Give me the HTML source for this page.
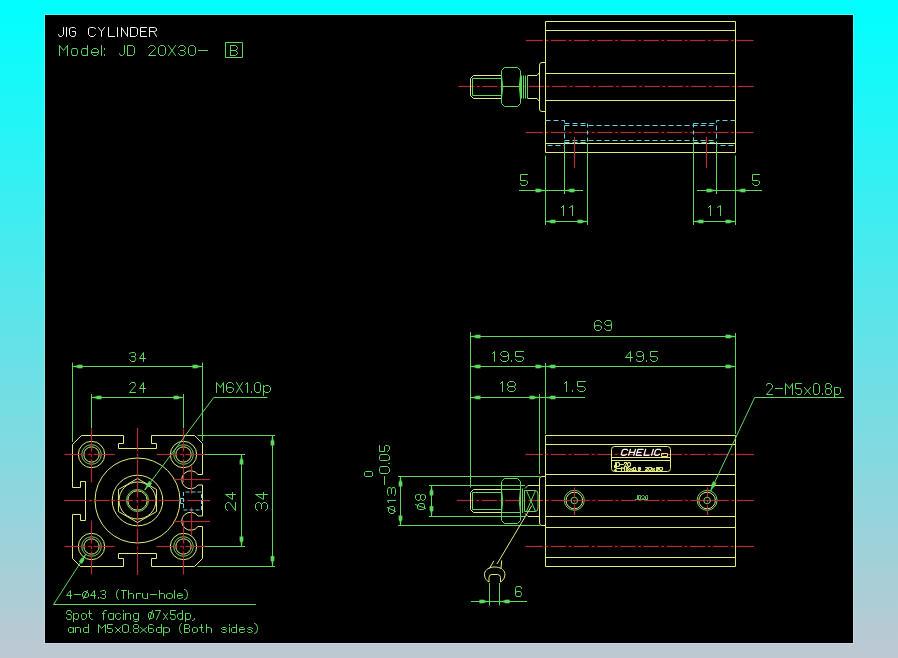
<!DOCTYPE html>
<html><head><meta charset="utf-8"><style>
html,body{margin:0;padding:0;width:898px;height:658px;overflow:hidden}
body{background:linear-gradient(180deg,#00ffff 0%,#bec8d2 100%)}
#cv{position:absolute;left:45px;top:15px;width:808px;height:628px;background:#000;box-shadow:0 0 0 1px rgba(255,255,255,0.22)}
svg{position:absolute;left:0;top:0}
</style></head><body><div id="cv"></div>
<svg width="898" height="658" viewBox="0 0 898 658">
<path d="M707.5 487.5L707.5 515" stroke="#200000" stroke-width="3" fill="none"/>
<path d="M692.1 500.5L722.1 500.5" stroke="#200000" stroke-width="3" fill="none"/>
<path d="M574.5 487.5L574.5 515" stroke="#200000" stroke-width="3" fill="none"/>
<path d="M559.3 500.5L589.3 500.5" stroke="#200000" stroke-width="3" fill="none"/>
<path d="M525.3 546.5L753.8 546.5" stroke="#200000" stroke-width="3" fill="none"/>
<path d="M456.8 500.5L753.8 500.5" stroke="#200000" stroke-width="3" fill="none"/>
<path d="M525.3 454.5L753.8 454.5" stroke="#200000" stroke-width="3" fill="none"/>
<path d="M191.5 507.5L191.5 535.5" stroke="#200000" stroke-width="3" fill="none"/>
<path d="M173 521.5L210 521.5" stroke="#200000" stroke-width="3" fill="none"/>
<path d="M191.5 465.5L191.5 493.5" stroke="#200000" stroke-width="3" fill="none"/>
<path d="M173 479.5L210 479.5" stroke="#200000" stroke-width="3" fill="none"/>
<path d="M137.5 428L137.5 575" stroke="#200000" stroke-width="3" fill="none"/>
<path d="M64 500.5L210 500.5" stroke="#200000" stroke-width="3" fill="none"/>
<path d="M183.5 520.5L183.5 574.5" stroke="#200000" stroke-width="3" fill="none"/>
<path d="M156.5 546.5L206.5 546.5" stroke="#200000" stroke-width="3" fill="none"/>
<path d="M91.5 520.5L91.5 574.5" stroke="#200000" stroke-width="3" fill="none"/>
<path d="M64.5 546.5L114.5 546.5" stroke="#200000" stroke-width="3" fill="none"/>
<path d="M183.5 428.5L183.5 482.5" stroke="#200000" stroke-width="3" fill="none"/>
<path d="M156.5 454.5L206.5 454.5" stroke="#200000" stroke-width="3" fill="none"/>
<path d="M91.5 428.5L91.5 482.5" stroke="#200000" stroke-width="3" fill="none"/>
<path d="M64.5 454.5L114.5 454.5" stroke="#200000" stroke-width="3" fill="none"/>
<path d="M706.5 137L706.5 168" stroke="#200000" stroke-width="3" fill="none"/>
<path d="M574.5 137L574.5 168" stroke="#200000" stroke-width="3" fill="none"/>
<path d="M525.8 132.5L753.5 132.5" stroke="#200000" stroke-width="3" fill="none"/>
<path d="M458.3 86.5L753.5 86.5" stroke="#200000" stroke-width="3" fill="none"/>
<path d="M525.8 40.5L753.5 40.5" stroke="#200000" stroke-width="3" fill="none"/>
<path d="M58.5 34.5L59.5 36.5L61.5 36.5L63.5 34.5L63.5 27.5M66.5 36.5L66.5 27.5M75.5 28.5L74.5 27.5L71.5 27.5L69.5 28.5L69.5 34.5L71.5 36.5L74.5 36.5L75.5 34.5L75.5 31.5L72.5 31.5M95.5 28.5L93.5 27.5L90.5 27.5L88.5 28.5L88.5 34.5L90.5 36.5L93.5 36.5L95.5 34.5M98.5 27.5L101.5 31.5L104.5 27.5M101.5 31.5L101.5 36.5M108.5 27.5L108.5 36.5L114.5 36.5M117.5 36.5L117.5 27.5M121.5 36.5L121.5 27.5L127.5 36.5L127.5 27.5M130.5 36.5L130.5 27.5L135.5 27.5L137.5 28.5L137.5 34.5L135.5 36.5L130.5 36.5M146.5 27.5L140.5 27.5L140.5 36.5L146.5 36.5M140.5 31.5L145.5 31.5M149.5 36.5L149.5 27.5L154.5 27.5L156.5 28.5L156.5 30.5L154.5 31.5L149.5 31.5M153.5 31.5L156.5 36.5" stroke="#f5f5f5" fill="none" stroke-width="1.0" stroke-linecap="round" stroke-linejoin="round"/>
<path d="M59.5 55.5L59.5 45.5L63.5 50.5L67.5 45.5L67.5 55.5M72.5 55.5L76.5 55.5L77.5 53.5L77.5 50.5L76.5 48.5L72.5 48.5L71.5 50.5L71.5 53.5L72.5 55.5M87.5 45.5L87.5 55.5M87.5 50.5L86.5 48.5L82.5 48.5L81.5 50.5L81.5 53.5L82.5 55.5L86.5 55.5L87.5 53.5M91.5 52.5L98.5 52.5L98.5 50.5L96.5 48.5L93.5 48.5L91.5 50.5L91.5 53.5L93.5 55.5L96.5 55.5L98.5 53.5M101.5 55.5L101.5 45.5M104.5 55.5L104.5 54.5M104.5 49.5L104.5 48.5M119.5 53.5L120.5 55.5L122.5 55.5L124.5 53.5L124.5 45.5M127.5 55.5L127.5 45.5L132.5 45.5L134.5 47.5L134.5 53.5L132.5 55.5L127.5 55.5M148.5 47.5L150.5 45.5L153.5 45.5L155.5 47.5L155.5 48.5L148.5 55.5L155.5 55.5M160.5 55.5L163.5 55.5L165.5 53.5L165.5 47.5L163.5 45.5L160.5 45.5L158.5 47.5L158.5 53.5L160.5 55.5M168.5 55.5L175.5 45.5M168.5 45.5L175.5 55.5M178.5 47.5L180.5 45.5L183.5 45.5L185.5 47.5L185.5 48.5L183.5 50.5L185.5 52.5L185.5 53.5L183.5 55.5L180.5 55.5L178.5 53.5M180.5 50.5L183.5 50.5M190.5 55.5L193.5 55.5L195.5 53.5L195.5 47.5L193.5 45.5L190.5 45.5L188.5 47.5L188.5 53.5L190.5 55.5M198.5 50.5L207.5 50.5" stroke="#5fd75f" fill="none" stroke-width="1.0" stroke-linecap="round" stroke-linejoin="round"/>
<path d="M225.5 42.5H242.5V57.5H225.5Z" stroke="#5fd75f" fill="none" stroke-width="1"/>
<path d="M230.5 55.5L230.5 45.5L235.5 45.5L237.5 47.5L237.5 48.5L235.5 50.5L230.5 50.5M235.5 50.5L237.5 52.5L237.5 53.5L235.5 55.5L230.5 55.5" stroke="#5fd75f" fill="none" stroke-width="1.0" stroke-linecap="round" stroke-linejoin="round"/>
<path d="M525.80 40.50L542.75 40.50M545.55 40.50L548.15 40.50M550.95 40.50L565.95 40.50M568.75 40.50L571.35 40.50M574.15 40.50L589.15 40.50M591.95 40.50L594.55 40.50M597.35 40.50L612.35 40.50M615.15 40.50L617.75 40.50M620.55 40.50L635.55 40.50M638.35 40.50L640.95 40.50M643.75 40.50L658.75 40.50M661.55 40.50L664.15 40.50M666.95 40.50L681.95 40.50M684.75 40.50L687.35 40.50M690.15 40.50L705.15 40.50M707.95 40.50L710.55 40.50M713.35 40.50L728.35 40.50M731.15 40.50L733.75 40.50M736.55 40.50L753.50 40.50" stroke="#a0343e" stroke-width="1" fill="none"/>
<path d="M458.30 86.50L474.20 86.50M477.00 86.50L479.60 86.50M482.40 86.50L497.40 86.50M500.20 86.50L502.80 86.50M505.60 86.50L520.60 86.50M523.40 86.50L526.00 86.50M528.80 86.50L543.80 86.50M546.60 86.50L549.20 86.50M552.00 86.50L567.00 86.50M569.80 86.50L572.40 86.50M575.20 86.50L590.20 86.50M593.00 86.50L595.60 86.50M598.40 86.50L613.40 86.50M616.20 86.50L618.80 86.50M621.60 86.50L636.60 86.50M639.40 86.50L642.00 86.50M644.80 86.50L659.80 86.50M662.60 86.50L665.20 86.50M668.00 86.50L683.00 86.50M685.80 86.50L688.40 86.50M691.20 86.50L706.20 86.50M709.00 86.50L711.60 86.50M714.40 86.50L729.40 86.50M732.20 86.50L734.80 86.50M737.60 86.50L753.50 86.50" stroke="#a0343e" stroke-width="1" fill="none"/>
<path d="M525.80 132.50L542.75 132.50M545.55 132.50L548.15 132.50M550.95 132.50L565.95 132.50M568.75 132.50L571.35 132.50M574.15 132.50L589.15 132.50M591.95 132.50L594.55 132.50M597.35 132.50L612.35 132.50M615.15 132.50L617.75 132.50M620.55 132.50L635.55 132.50M638.35 132.50L640.95 132.50M643.75 132.50L658.75 132.50M661.55 132.50L664.15 132.50M666.95 132.50L681.95 132.50M684.75 132.50L687.35 132.50M690.15 132.50L705.15 132.50M707.95 132.50L710.55 132.50M713.35 132.50L728.35 132.50M731.15 132.50L733.75 132.50M736.55 132.50L753.50 132.50" stroke="#a0343e" stroke-width="1" fill="none"/>
<path d="M545.5 21.5H735.5V152.5H545.5Z" stroke="#e2ea80" fill="none" stroke-width="1"/>
<line x1="545.5" y1="30.5" x2="735.5" y2="30.5" stroke="#e2ea80" stroke-width="1"/>
<line x1="545.5" y1="73.5" x2="735.5" y2="73.5" stroke="#e2ea80" stroke-width="1"/>
<line x1="545.5" y1="100.5" x2="735.5" y2="100.5" stroke="#e2ea80" stroke-width="1"/>
<line x1="545.5" y1="143.5" x2="735.5" y2="143.5" stroke="#e2ea80" stroke-width="1"/>
<path d="M545.5 62.5H542Q539.5 62.5 539.5 65V109Q539.5 111.5 542 111.5H545.5" stroke="#e2ea80" fill="none" stroke-width="1"/>
<path d="M539.5 72.5L537 75.5H527.5M527.5 98.5H537L539.5 101.5" stroke="#e2ea80" fill="none" stroke-width="1"/>
<path d="M501 75.5H473.5L470.5 78.5V95.5L473.5 98.5H501" stroke="#e2ea80" fill="none" stroke-width="1"/>
<path d="M501 78.5H472.5V95.5H501" stroke="#5fd75f" fill="none" stroke-width="1"/>
<line x1="521.5" y1="75.5" x2="521.5" y2="98.5" stroke="#5fd75f" stroke-width="1"/>
<line x1="523.5" y1="75.5" x2="523.5" y2="98.5" stroke="#5fd75f" stroke-width="1"/>
<line x1="525.5" y1="75.5" x2="525.5" y2="98.5" stroke="#5fd75f" stroke-width="1"/>
<line x1="527.5" y1="75.5" x2="527.5" y2="98.5" stroke="#5fd75f" stroke-width="1"/>
<path d="M504.5 67.5H517.5L520.5 70.5V103.5L517.5 106.5H504.5L501.5 103.5V70.5Z" stroke="#5fd75f" fill="none" stroke-width="1"/>
<path d="M501.5 75.5Q504 86.5 501.5 98.5M520.5 75.5Q518 86.5 520.5 98.5" stroke="#5fd75f" fill="none" stroke-width="1"/>
<line x1="501" y1="86.5" x2="520.7" y2="86.5" stroke="#5fd75f" stroke-width="1"/>
<path d="M545.5 120.5H564.5V145.5H545.5" stroke="#64d2e0" fill="none" stroke-width="1" stroke-dasharray="5 3"/>
<path d="M735.5 120.5H716.5V145.5H735.5" stroke="#64d2e0" fill="none" stroke-width="1" stroke-dasharray="5 3"/>
<line x1="564.5" y1="123.5" x2="587.5" y2="123.5" stroke="#64d2e0" stroke-width="1" stroke-dasharray="5 3"/>
<line x1="693.5" y1="123.5" x2="716.5" y2="123.5" stroke="#64d2e0" stroke-width="1" stroke-dasharray="5 3"/>
<line x1="564.5" y1="125.5" x2="716.5" y2="125.5" stroke="#64d2e0" stroke-width="1" stroke-dasharray="5 3"/>
<line x1="564.5" y1="140.5" x2="716.5" y2="140.5" stroke="#64d2e0" stroke-width="1" stroke-dasharray="5 3"/>
<line x1="564.5" y1="142.5" x2="587.5" y2="142.5" stroke="#64d2e0" stroke-width="1" stroke-dasharray="5 3"/>
<line x1="693.5" y1="142.5" x2="716.5" y2="142.5" stroke="#64d2e0" stroke-width="1" stroke-dasharray="5 3"/>
<line x1="587.5" y1="123.5" x2="587.5" y2="142" stroke="#64d2e0" stroke-width="1" stroke-dasharray="4 3"/>
<line x1="693.5" y1="123.5" x2="693.5" y2="142" stroke="#64d2e0" stroke-width="1" stroke-dasharray="4 3"/>
<path d="M574.50 137.00L574.50 168.00" stroke="#a0343e" stroke-width="1" fill="none"/>
<path d="M706.50 137.00L706.50 168.00" stroke="#a0343e" stroke-width="1" fill="none"/>
<line x1="545.5" y1="155.5" x2="545.5" y2="225" stroke="#5fd75f" stroke-width="1"/>
<line x1="735.5" y1="155.5" x2="735.5" y2="225" stroke="#5fd75f" stroke-width="1"/>
<line x1="564.5" y1="146" x2="564.5" y2="194" stroke="#5fd75f" stroke-width="1"/>
<line x1="587.5" y1="143.5" x2="587.5" y2="225" stroke="#5fd75f" stroke-width="1"/>
<line x1="693.5" y1="143.5" x2="693.5" y2="225" stroke="#5fd75f" stroke-width="1"/>
<line x1="716.5" y1="146" x2="716.5" y2="194" stroke="#5fd75f" stroke-width="1"/>
<line x1="519" y1="190.5" x2="583" y2="190.5" stroke="#5fd75f" stroke-width="1"/>
<path d="M545.50 190.50L541.00 191.20L540.00 192.10L535.50 192.10L536.50 190.50L535.50 188.90L540.00 188.90L541.00 189.80Z" fill="#5fd75f" stroke="#5fd75f" stroke-width="0.5"/>
<path d="M564.50 190.50L569.00 189.80L570.00 188.90L574.50 188.90L573.50 190.50L574.50 192.10L570.00 192.10L569.00 191.20Z" fill="#5fd75f" stroke="#5fd75f" stroke-width="0.5"/>
<line x1="697" y1="190.5" x2="762" y2="190.5" stroke="#5fd75f" stroke-width="1"/>
<path d="M716.50 190.50L712.00 191.20L711.00 192.10L706.50 192.10L707.50 190.50L706.50 188.90L711.00 188.90L712.00 189.80Z" fill="#5fd75f" stroke="#5fd75f" stroke-width="0.5"/>
<path d="M735.50 190.50L740.00 189.80L741.00 188.90L745.50 188.90L744.50 190.50L745.50 192.10L741.00 192.10L740.00 191.20Z" fill="#5fd75f" stroke="#5fd75f" stroke-width="0.5"/>
<line x1="545.5" y1="221.5" x2="587.5" y2="221.5" stroke="#5fd75f" stroke-width="1"/>
<path d="M545.50 221.50L550.00 220.80L551.00 219.90L555.50 219.90L554.50 221.50L555.50 223.10L551.00 223.10L550.00 222.20Z" fill="#5fd75f" stroke="#5fd75f" stroke-width="0.5"/>
<path d="M587.50 221.50L583.00 222.20L582.00 223.10L577.50 223.10L578.50 221.50L577.50 219.90L582.00 219.90L583.00 220.80Z" fill="#5fd75f" stroke="#5fd75f" stroke-width="0.5"/>
<line x1="693.5" y1="221.5" x2="735.5" y2="221.5" stroke="#5fd75f" stroke-width="1"/>
<path d="M693.50 221.50L698.00 220.80L699.00 219.90L703.50 219.90L702.50 221.50L703.50 223.10L699.00 223.10L698.00 222.20Z" fill="#5fd75f" stroke="#5fd75f" stroke-width="0.5"/>
<path d="M735.50 221.50L731.00 222.20L730.00 223.10L725.50 223.10L726.50 221.50L725.50 219.90L730.00 219.90L731.00 220.80Z" fill="#5fd75f" stroke="#5fd75f" stroke-width="0.5"/>
<path d="M527.5 174.5L520.5 174.5L520.5 180.5L525.5 180.5L527.5 181.5L527.5 183.5L525.5 185.5L521.5 185.5L520.5 183.5" stroke="#5fd75f" fill="none" stroke-width="1.0" stroke-linecap="round" stroke-linejoin="round"/>
<path d="M759.5 174.5L752.5 174.5L752.5 180.5L757.5 180.5L759.5 181.5L759.5 183.5L757.5 185.5L754.5 185.5L752.5 183.5" stroke="#5fd75f" fill="none" stroke-width="1.0" stroke-linecap="round" stroke-linejoin="round"/>
<path d="M561.5 207.5L563.5 205.5L563.5 215.5M569.5 207.5L572.5 205.5L572.5 215.5" stroke="#5fd75f" fill="none" stroke-width="1.0" stroke-linecap="round" stroke-linejoin="round"/>
<path d="M708.5 207.5L710.5 205.5L710.5 215.5M717.5 207.5L720.5 205.5L720.5 215.5" stroke="#5fd75f" fill="none" stroke-width="1.0" stroke-linecap="round" stroke-linejoin="round"/>
<path d="M81.5 435.5H123.5V443.5H118.5V448.5H156.5V443.5H151.5V435.5H194.5L202.5 443.5V474.5H198A9 9 0 1 0 198 485H202.5V516H198A9 9 0 1 0 198 526.5H202.5V558.5L194.5 566.5H151.5V558.5H156.5V553.5H118.5V558.5H123.5V566.5H80.5L72.5 558.5V514.5H80.5V520.5H85.5V481.5H80.5V487.5H72.5V444.5Z" stroke="#e2ea80" fill="none" stroke-width="1"/>
<circle cx="137.5" cy="500.5" r="42.5" stroke="#e2ea80" fill="none" stroke-width="1"/>
<circle cx="137.5" cy="500.5" r="25.3" stroke="#e2ea80" fill="none" stroke-width="1"/>
<path d="M137.50 478.50L156.55 489.50L156.55 511.50L137.50 522.50L118.45 511.50L118.45 489.50Z" stroke="#e2ea80" fill="none" stroke-width="1"/>
<circle cx="137.5" cy="500.5" r="18.5" stroke="#e2ea80" fill="none" stroke-width="1"/>
<circle cx="137.5" cy="500.5" r="11" stroke="#5fd75f" fill="none" stroke-width="1"/>
<circle cx="137.5" cy="500.5" r="9.7" stroke="#e2ea80" fill="none" stroke-width="1"/>
<circle cx="91.5" cy="454.5" r="13.2" stroke="#e2ea80" fill="none" stroke-width="1"/>
<circle cx="91.5" cy="454.5" r="9.8" stroke="#5fd75f" fill="none" stroke-width="1"/>
<circle cx="91.5" cy="454.5" r="7.7" stroke="#e2ea80" fill="none" stroke-width="1"/>
<path d="M64.50 454.50L85.40 454.50M88.20 454.50L90.80 454.50M93.60 454.50L114.50 454.50" stroke="#a0343e" stroke-width="1" fill="none"/>
<path d="M91.50 428.50L91.50 451.40M91.50 454.20L91.50 456.80M91.50 459.60L91.50 482.50" stroke="#a0343e" stroke-width="1" fill="none"/>
<circle cx="183.5" cy="454.5" r="13.2" stroke="#e2ea80" fill="none" stroke-width="1"/>
<circle cx="183.5" cy="454.5" r="9.8" stroke="#5fd75f" fill="none" stroke-width="1"/>
<circle cx="183.5" cy="454.5" r="7.7" stroke="#e2ea80" fill="none" stroke-width="1"/>
<path d="M156.50 454.50L177.40 454.50M180.20 454.50L182.80 454.50M185.60 454.50L206.50 454.50" stroke="#a0343e" stroke-width="1" fill="none"/>
<path d="M183.50 428.50L183.50 451.40M183.50 454.20L183.50 456.80M183.50 459.60L183.50 482.50" stroke="#a0343e" stroke-width="1" fill="none"/>
<circle cx="91.5" cy="546.5" r="13.2" stroke="#e2ea80" fill="none" stroke-width="1"/>
<circle cx="91.5" cy="546.5" r="9.8" stroke="#5fd75f" fill="none" stroke-width="1"/>
<circle cx="91.5" cy="546.5" r="7.7" stroke="#e2ea80" fill="none" stroke-width="1"/>
<path d="M64.50 546.50L85.40 546.50M88.20 546.50L90.80 546.50M93.60 546.50L114.50 546.50" stroke="#a0343e" stroke-width="1" fill="none"/>
<path d="M91.50 520.50L91.50 543.40M91.50 546.20L91.50 548.80M91.50 551.60L91.50 574.50" stroke="#a0343e" stroke-width="1" fill="none"/>
<circle cx="183.5" cy="546.5" r="13.2" stroke="#e2ea80" fill="none" stroke-width="1"/>
<circle cx="183.5" cy="546.5" r="9.8" stroke="#5fd75f" fill="none" stroke-width="1"/>
<circle cx="183.5" cy="546.5" r="7.7" stroke="#e2ea80" fill="none" stroke-width="1"/>
<path d="M156.50 546.50L177.40 546.50M180.20 546.50L182.80 546.50M185.60 546.50L206.50 546.50" stroke="#a0343e" stroke-width="1" fill="none"/>
<path d="M183.50 520.50L183.50 543.40M183.50 546.20L183.50 548.80M183.50 551.60L183.50 574.50" stroke="#a0343e" stroke-width="1" fill="none"/>
<path d="M64.00 500.50L86.50 500.50M89.30 500.50L91.90 500.50M94.70 500.50L109.70 500.50M112.50 500.50L115.10 500.50M117.90 500.50L132.90 500.50M135.70 500.50L138.30 500.50M141.10 500.50L156.10 500.50M158.90 500.50L161.50 500.50M164.30 500.50L179.30 500.50M182.10 500.50L184.70 500.50M187.50 500.50L210.00 500.50" stroke="#a0343e" stroke-width="1" fill="none"/>
<path d="M137.50 428.00L137.50 451.00M137.50 453.80L137.50 456.40M137.50 459.20L137.50 474.20M137.50 477.00L137.50 479.60M137.50 482.40L137.50 497.40M137.50 500.20L137.50 502.80M137.50 505.60L137.50 520.60M137.50 523.40L137.50 526.00M137.50 528.80L137.50 543.80M137.50 546.60L137.50 549.20M137.50 552.00L137.50 575.00" stroke="#a0343e" stroke-width="1" fill="none"/>
<path d="M173.00 479.50L210.00 479.50" stroke="#a0343e" stroke-width="1" fill="none"/>
<path d="M191.50 465.50L191.50 493.50" stroke="#a0343e" stroke-width="1" fill="none"/>
<path d="M173.00 521.50L210.00 521.50" stroke="#a0343e" stroke-width="1" fill="none"/>
<path d="M191.50 507.50L191.50 535.50" stroke="#a0343e" stroke-width="1" fill="none"/>
<path d="M183.5 492V510H201.5V492Z" stroke="#64d2e0" fill="none" stroke-width="1" stroke-dasharray="4 2"/>
<path d="M183.5 498.5H180.5V503.5H183.5" stroke="#64d2e0" fill="none" stroke-width="1"/>
<line x1="72.5" y1="362.5" x2="72.5" y2="442" stroke="#5fd75f" stroke-width="1"/>
<line x1="202.5" y1="362.5" x2="202.5" y2="441" stroke="#5fd75f" stroke-width="1"/>
<line x1="72.5" y1="366.5" x2="202.5" y2="366.5" stroke="#5fd75f" stroke-width="1"/>
<path d="M72.50 366.50L77.00 365.80L78.00 364.90L82.50 364.90L81.50 366.50L82.50 368.10L78.00 368.10L77.00 367.20Z" fill="#5fd75f" stroke="#5fd75f" stroke-width="0.5"/>
<path d="M202.50 366.50L198.00 367.20L197.00 368.10L192.50 368.10L193.50 366.50L192.50 364.90L197.00 364.90L198.00 365.80Z" fill="#5fd75f" stroke="#5fd75f" stroke-width="0.5"/>
<line x1="91.5" y1="394" x2="91.5" y2="428" stroke="#5fd75f" stroke-width="1"/>
<line x1="183.5" y1="394" x2="183.5" y2="428" stroke="#5fd75f" stroke-width="1"/>
<line x1="91.5" y1="397.5" x2="183.5" y2="397.5" stroke="#5fd75f" stroke-width="1"/>
<path d="M91.50 397.50L96.00 396.80L97.00 395.90L101.50 395.90L100.50 397.50L101.50 399.10L97.00 399.10L96.00 398.20Z" fill="#5fd75f" stroke="#5fd75f" stroke-width="0.5"/>
<path d="M183.50 397.50L179.00 398.20L178.00 399.10L173.50 399.10L174.50 397.50L173.50 395.90L178.00 395.90L179.00 396.80Z" fill="#5fd75f" stroke="#5fd75f" stroke-width="0.5"/>
<path d="M129.5 353.5L131.5 352.5L134.5 352.5L135.5 353.5L135.5 355.5L134.5 356.5L135.5 358.5L135.5 359.5L134.5 361.5L131.5 361.5L129.5 359.5M131.5 356.5L134.5 356.5M143.5 361.5L143.5 352.5L139.5 358.5L145.5 358.5" stroke="#5fd75f" fill="none" stroke-width="1.0" stroke-linecap="round" stroke-linejoin="round"/>
<path d="M129.5 384.5L131.5 382.5L134.5 382.5L135.5 384.5L135.5 385.5L129.5 392.5L135.5 392.5M143.5 392.5L143.5 382.5L139.5 388.5L145.5 388.5" stroke="#5fd75f" fill="none" stroke-width="1.0" stroke-linecap="round" stroke-linejoin="round"/>
<line x1="197.5" y1="435.5" x2="275" y2="435.5" stroke="#5fd75f" stroke-width="1"/>
<line x1="197.5" y1="566.5" x2="275" y2="566.5" stroke="#5fd75f" stroke-width="1"/>
<line x1="272.5" y1="435.5" x2="272.5" y2="566" stroke="#5fd75f" stroke-width="1"/>
<path d="M272.50 435.50L273.20 440.00L274.10 441.00L274.10 445.50L272.50 444.50L270.90 445.50L270.90 441.00L271.80 440.00Z" fill="#5fd75f" stroke="#5fd75f" stroke-width="0.5"/>
<path d="M272.50 566.00L271.80 561.50L270.90 560.50L270.90 556.00L272.50 557.00L274.10 556.00L274.10 560.50L273.20 561.50Z" fill="#5fd75f" stroke="#5fd75f" stroke-width="0.5"/>
<line x1="205" y1="454.5" x2="245" y2="454.5" stroke="#5fd75f" stroke-width="1"/>
<line x1="205" y1="546.5" x2="245" y2="546.5" stroke="#5fd75f" stroke-width="1"/>
<line x1="241.5" y1="454.5" x2="241.5" y2="546.5" stroke="#5fd75f" stroke-width="1"/>
<path d="M241.50 454.50L242.20 459.00L243.10 460.00L243.10 464.50L241.50 463.50L239.90 464.50L239.90 460.00L240.80 459.00Z" fill="#5fd75f" stroke="#5fd75f" stroke-width="0.5"/>
<path d="M241.50 546.50L240.80 542.00L239.90 541.00L239.90 536.50L241.50 537.50L243.10 536.50L243.10 541.00L242.20 542.00Z" fill="#5fd75f" stroke="#5fd75f" stroke-width="0.5"/>
<path d="M227.5 510.5L225.5 508.5L225.5 504.5L227.5 502.5L229.5 502.5L235.5 510.5L235.5 502.5M235.5 494.5L225.5 494.5L232.5 499.5L232.5 492.5" stroke="#5fd75f" fill="none" stroke-width="1.0" stroke-linecap="round" stroke-linejoin="round"/>
<path d="M257.5 510.5L255.5 508.5L255.5 504.5L257.5 502.5L259.5 502.5L261.5 504.5L263.5 502.5L265.5 502.5L267.5 504.5L267.5 508.5L265.5 510.5M261.5 508.5L261.5 504.5M267.5 494.5L255.5 494.5L263.5 499.5L263.5 492.5" stroke="#5fd75f" fill="none" stroke-width="1.0" stroke-linecap="round" stroke-linejoin="round"/>
<path d="M216.5 392.5L216.5 382.5L220.5 387.5L223.5 382.5L223.5 392.5M233.5 384.5L231.5 382.5L228.5 382.5L226.5 384.5L226.5 390.5L228.5 392.5L231.5 392.5L233.5 390.5L233.5 388.5L231.5 387.5L228.5 387.5L226.5 388.5M236.5 392.5L242.5 382.5M236.5 382.5L242.5 392.5M245.5 384.5L247.5 382.5L247.5 392.5M251.5 392.5L251.5 391.5M256.5 392.5L259.5 392.5L260.5 390.5L260.5 384.5L259.5 382.5L256.5 382.5L254.5 384.5L254.5 390.5L256.5 392.5M263.5 395.5L263.5 385.5M263.5 387.5L265.5 385.5L268.5 385.5L270.5 387.5L270.5 390.5L268.5 392.5L265.5 392.5L263.5 390.5" stroke="#5fd75f" fill="none" stroke-width="1.0" stroke-linecap="round" stroke-linejoin="round"/>
<line x1="213.7" y1="397.5" x2="267.5" y2="397.5" stroke="#5fd75f" stroke-width="1"/>
<line x1="213.7" y1="397.5" x2="144.7" y2="490" stroke="#5fd75f" stroke-width="1"/>
<path d="M144.70 490.00L146.83 485.97L146.71 484.63L149.40 481.03L150.08 482.79L151.96 482.94L149.27 486.55L147.95 486.81Z" fill="#5fd75f" stroke="#5fd75f" stroke-width="0.5"/>
<line x1="85.7" y1="554.5" x2="53.5" y2="604.5" stroke="#5fd75f" stroke-width="1"/>
<path d="M85.70 554.50L83.85 558.66L84.07 559.99L81.63 563.77L80.83 562.07L78.94 562.04L81.38 558.26L82.68 557.90Z" fill="#5fd75f" stroke="#5fd75f" stroke-width="0.5"/>
<line x1="53.5" y1="604.5" x2="255.9" y2="604.5" stroke="#5fd75f" stroke-width="1"/>
<path d="M70.5 598.5L70.5 590.5L66.5 595.5L71.5 595.5M74.5 594.5L80.5 594.5M84.5 597.5L86.5 597.5L88.5 596.5L88.5 593.5L86.5 591.5L84.5 591.5L82.5 593.5L82.5 596.5L84.5 597.5M83.5 598.5L87.5 590.5M94.5 598.5L94.5 590.5L90.5 595.5L95.5 595.5M98.5 598.5L98.5 597.5M100.5 591.5L102.5 590.5L104.5 590.5L105.5 591.5L105.5 593.5L104.5 594.5L105.5 595.5L105.5 597.5L104.5 598.5L102.5 598.5L100.5 597.5M102.5 594.5L104.5 594.5M118.5 589.5L117.5 590.5L116.5 593.5L116.5 595.5L117.5 598.5L118.5 599.5M121.5 590.5L126.5 590.5M123.5 590.5L123.5 598.5M128.5 590.5L128.5 598.5M128.5 594.5L130.5 593.5L132.5 593.5L133.5 594.5L133.5 598.5M136.5 598.5L136.5 593.5M136.5 594.5L137.5 593.5L140.5 593.5M142.5 593.5L142.5 597.5L144.5 598.5L146.5 598.5L147.5 597.5M147.5 593.5L147.5 598.5M150.5 594.5L156.5 594.5M159.5 590.5L159.5 598.5M159.5 594.5L160.5 593.5L163.5 593.5L164.5 594.5L164.5 598.5M168.5 598.5L170.5 598.5L172.5 597.5L172.5 594.5L170.5 593.5L168.5 593.5L166.5 594.5L166.5 597.5L168.5 598.5M174.5 598.5L174.5 590.5M177.5 595.5L182.5 595.5L182.5 594.5L180.5 593.5L178.5 593.5L177.5 594.5L177.5 597.5L178.5 598.5L180.5 598.5L182.5 597.5M184.5 589.5L186.5 590.5L187.5 593.5L187.5 595.5L186.5 598.5L184.5 599.5" stroke="#5fd75f" fill="none" stroke-width="1.0" stroke-linecap="round" stroke-linejoin="round"/>
<path d="M71.5 612.5L70.5 610.5L67.5 610.5L66.5 612.5L66.5 613.5L67.5 614.5L70.5 614.5L71.5 616.5L71.5 617.5L70.5 619.5L67.5 619.5L66.5 617.5M73.5 621.5L73.5 613.5M73.5 614.5L75.5 613.5L77.5 613.5L78.5 614.5L78.5 617.5L77.5 619.5L75.5 619.5L73.5 617.5M82.5 619.5L84.5 619.5L86.5 617.5L86.5 614.5L84.5 613.5L82.5 613.5L81.5 614.5L81.5 617.5L82.5 619.5M89.5 610.5L89.5 617.5L91.5 619.5L92.5 619.5M88.5 613.5L91.5 613.5M106.5 610.5L104.5 610.5L103.5 612.5L103.5 619.5M102.5 613.5L104.5 613.5M113.5 613.5L113.5 619.5M113.5 614.5L112.5 613.5L109.5 613.5L108.5 614.5L108.5 617.5L109.5 619.5L112.5 619.5L113.5 617.5M120.5 614.5L119.5 613.5L117.5 613.5L115.5 614.5L115.5 617.5L117.5 619.5L119.5 619.5L120.5 617.5M123.5 619.5L123.5 613.5M123.5 611.5L123.5 610.5M125.5 619.5L125.5 613.5M125.5 614.5L127.5 613.5L129.5 613.5L130.5 614.5L130.5 619.5M138.5 613.5L138.5 620.5L137.5 621.5L134.5 621.5L133.5 620.5M138.5 614.5L137.5 613.5L134.5 613.5L133.5 614.5L133.5 617.5L134.5 619.5L137.5 619.5L138.5 617.5M149.5 618.5L151.5 618.5L153.5 617.5L153.5 613.5L151.5 612.5L149.5 612.5L148.5 613.5L148.5 617.5L149.5 618.5M149.5 619.5L152.5 610.5M155.5 610.5L160.5 610.5L156.5 619.5M163.5 619.5L167.5 613.5M163.5 613.5L167.5 619.5M175.5 610.5L170.5 610.5L170.5 614.5L174.5 614.5L175.5 616.5L175.5 617.5L174.5 619.5L171.5 619.5L170.5 617.5M182.5 610.5L182.5 619.5M182.5 614.5L181.5 613.5L179.5 613.5L177.5 614.5L177.5 617.5L179.5 619.5L181.5 619.5L182.5 617.5M185.5 621.5L185.5 613.5M185.5 614.5L186.5 613.5L189.5 613.5L190.5 614.5L190.5 617.5L189.5 619.5L186.5 619.5L185.5 617.5M194.5 618.5L194.5 619.5L192.5 620.5" stroke="#5fd75f" fill="none" stroke-width="1.0" stroke-linecap="round" stroke-linejoin="round"/>
<path d="M73.5 627.5L73.5 632.5M73.5 628.5L71.5 627.5L69.5 627.5L68.5 628.5L68.5 631.5L69.5 632.5L71.5 632.5L73.5 631.5M75.5 632.5L75.5 627.5M75.5 628.5L76.5 627.5L79.5 627.5L80.5 628.5L80.5 632.5M88.5 624.5L88.5 632.5M88.5 628.5L87.5 627.5L84.5 627.5L83.5 628.5L83.5 631.5L84.5 632.5L87.5 632.5L88.5 631.5M98.5 632.5L98.5 624.5L101.5 628.5L105.5 624.5L105.5 632.5M112.5 624.5L107.5 624.5L107.5 628.5L111.5 628.5L112.5 629.5L112.5 631.5L111.5 632.5L108.5 632.5L107.5 631.5M115.5 632.5L120.5 627.5M115.5 627.5L120.5 632.5M124.5 632.5L126.5 632.5L128.5 631.5L128.5 625.5L126.5 624.5L124.5 624.5L122.5 625.5L122.5 631.5L124.5 632.5M130.5 632.5L130.5 632.5M134.5 628.5L133.5 627.5L133.5 625.5L134.5 624.5L137.5 624.5L138.5 625.5L138.5 627.5L137.5 628.5L134.5 628.5L133.5 629.5L133.5 631.5L134.5 632.5L137.5 632.5L138.5 631.5L138.5 629.5L137.5 628.5M140.5 632.5L146.5 627.5M140.5 627.5L146.5 632.5M153.5 625.5L152.5 624.5L149.5 624.5L148.5 625.5L148.5 631.5L149.5 632.5L152.5 632.5L153.5 631.5L153.5 629.5L152.5 628.5L149.5 628.5L148.5 629.5M161.5 624.5L161.5 632.5M161.5 628.5L160.5 627.5L157.5 627.5L156.5 628.5L156.5 631.5L157.5 632.5L160.5 632.5L161.5 631.5M163.5 635.5L163.5 627.5M163.5 628.5L165.5 627.5L167.5 627.5L169.5 628.5L169.5 631.5L167.5 632.5L165.5 632.5L163.5 631.5M181.5 623.5L180.5 624.5L179.5 627.5L179.5 629.5L180.5 632.5L181.5 633.5M184.5 632.5L184.5 624.5L188.5 624.5L189.5 625.5L189.5 627.5L188.5 628.5L184.5 628.5M188.5 628.5L189.5 629.5L189.5 631.5L188.5 632.5L184.5 632.5M193.5 632.5L195.5 632.5L197.5 631.5L197.5 628.5L195.5 627.5L193.5 627.5L192.5 628.5L192.5 631.5L193.5 632.5M201.5 624.5L201.5 631.5L202.5 632.5L203.5 632.5M199.5 627.5L202.5 627.5M206.5 624.5L206.5 632.5M206.5 628.5L207.5 627.5L209.5 627.5L211.5 628.5L211.5 632.5M226.5 628.5L225.5 627.5L222.5 627.5L221.5 628.5L222.5 629.5L225.5 629.5L226.5 631.5L225.5 632.5L222.5 632.5L221.5 631.5M229.5 632.5L229.5 627.5M229.5 625.5L229.5 624.5M236.5 624.5L236.5 632.5M236.5 628.5L235.5 627.5L232.5 627.5L231.5 628.5L231.5 631.5L232.5 632.5L235.5 632.5L236.5 631.5M239.5 629.5L244.5 629.5L244.5 628.5L243.5 627.5L240.5 627.5L239.5 628.5L239.5 631.5L240.5 632.5L243.5 632.5L244.5 631.5M252.5 628.5L250.5 627.5L248.5 627.5L247.5 628.5L248.5 629.5L250.5 629.5L252.5 631.5L250.5 632.5L248.5 632.5L247.5 631.5M254.5 623.5L256.5 624.5L257.5 627.5L257.5 629.5L256.5 632.5L254.5 633.5" stroke="#5fd75f" fill="none" stroke-width="1.0" stroke-linecap="round" stroke-linejoin="round"/>
<path d="M545.5 435.5H735.5V566.5H545.5Z" stroke="#e2ea80" fill="none" stroke-width="1"/>
<line x1="545.5" y1="444.5" x2="735.5" y2="444.5" stroke="#e2ea80" stroke-width="1"/>
<line x1="545.5" y1="474.5" x2="735.5" y2="474.5" stroke="#e2ea80" stroke-width="1"/>
<line x1="545.5" y1="485.5" x2="735.5" y2="485.5" stroke="#e2ea80" stroke-width="1"/>
<line x1="545.5" y1="516.5" x2="735.5" y2="516.5" stroke="#e2ea80" stroke-width="1"/>
<line x1="545.5" y1="527.5" x2="735.5" y2="527.5" stroke="#e2ea80" stroke-width="1"/>
<line x1="545.5" y1="557.5" x2="735.5" y2="557.5" stroke="#e2ea80" stroke-width="1"/>
<path d="M525.30 454.50L542.65 454.50M545.45 454.50L548.05 454.50M550.85 454.50L565.85 454.50M568.65 454.50L571.25 454.50M574.05 454.50L589.05 454.50M591.85 454.50L594.45 454.50M597.25 454.50L612.25 454.50M615.05 454.50L617.65 454.50M620.45 454.50L635.45 454.50M638.25 454.50L640.85 454.50M643.65 454.50L658.65 454.50M661.45 454.50L664.05 454.50M666.85 454.50L681.85 454.50M684.65 454.50L687.25 454.50M690.05 454.50L705.05 454.50M707.85 454.50L710.45 454.50M713.25 454.50L728.25 454.50M731.05 454.50L733.65 454.50M736.45 454.50L753.80 454.50" stroke="#a0343e" stroke-width="1" fill="none"/>
<path d="M456.80 500.50L473.60 500.50M476.40 500.50L479.00 500.50M481.80 500.50L496.80 500.50M499.60 500.50L502.20 500.50M505.00 500.50L520.00 500.50M522.80 500.50L525.40 500.50M528.20 500.50L543.20 500.50M546.00 500.50L548.60 500.50M551.40 500.50L566.40 500.50M569.20 500.50L571.80 500.50M574.60 500.50L589.60 500.50M592.40 500.50L595.00 500.50M597.80 500.50L612.80 500.50M615.60 500.50L618.20 500.50M621.00 500.50L636.00 500.50M638.80 500.50L641.40 500.50M644.20 500.50L659.20 500.50M662.00 500.50L664.60 500.50M667.40 500.50L682.40 500.50M685.20 500.50L687.80 500.50M690.60 500.50L705.60 500.50M708.40 500.50L711.00 500.50M713.80 500.50L728.80 500.50M731.60 500.50L734.20 500.50M737.00 500.50L753.80 500.50" stroke="#a0343e" stroke-width="1" fill="none"/>
<path d="M525.30 546.50L542.65 546.50M545.45 546.50L548.05 546.50M550.85 546.50L565.85 546.50M568.65 546.50L571.25 546.50M574.05 546.50L589.05 546.50M591.85 546.50L594.45 546.50M597.25 546.50L612.25 546.50M615.05 546.50L617.65 546.50M620.45 546.50L635.45 546.50M638.25 546.50L640.85 546.50M643.65 546.50L658.65 546.50M661.45 546.50L664.05 546.50M666.85 546.50L681.85 546.50M684.65 546.50L687.25 546.50M690.05 546.50L705.05 546.50M707.85 546.50L710.45 546.50M713.25 546.50L728.25 546.50M731.05 546.50L733.65 546.50M736.45 546.50L753.80 546.50" stroke="#a0343e" stroke-width="1" fill="none"/>
<path d="M545.5 476.5H542Q539.5 476.5 539.5 479V523Q539.5 525.5 542 525.5H545.5" stroke="#e2ea80" fill="none" stroke-width="1"/>
<path d="M539.5 485.5H528L525 488.5M525 513.5L528 516.5H539.5" stroke="#e2ea80" fill="none" stroke-width="1"/>
<path d="M524.5 490.5H535Q538 490.5 538 494V508Q538 511.5 535 511.5H524.5Z" stroke="#5fd75f" fill="none" stroke-width="1"/>
<line x1="526.5" y1="490.5" x2="535.5" y2="511.5" stroke="#5fd75f" stroke-width="1"/>
<line x1="535.5" y1="490.5" x2="526.5" y2="511.5" stroke="#5fd75f" stroke-width="1"/>
<line x1="520.5" y1="488.5" x2="520.5" y2="513" stroke="#5fd75f" stroke-width="1"/>
<line x1="522.5" y1="488.5" x2="522.5" y2="513" stroke="#5fd75f" stroke-width="1"/>
<path d="M504.5 478.5H517.5L520.5 481.5V520.5L517.5 523.5H504.5L501.5 520.5V481.5Z" stroke="#5fd75f" fill="none" stroke-width="1"/>
<path d="M501.5 489.5Q504 501 501.5 512.5M520.5 489.5Q518 501 520.5 512.5" stroke="#5fd75f" fill="none" stroke-width="1"/>
<line x1="501.5" y1="489.5" x2="520.5" y2="489.5" stroke="#5fd75f" stroke-width="1"/>
<line x1="501.5" y1="512.5" x2="520.5" y2="512.5" stroke="#5fd75f" stroke-width="1"/>
<path d="M501.5 489.5H473.5L470.5 492.5V509.5L473.5 512.5H501.5" stroke="#e2ea80" fill="none" stroke-width="1"/>
<path d="M501.5 492.5H472.5V509.5H501.5" stroke="#5fd75f" fill="none" stroke-width="1"/>
<circle cx="574.3" cy="500.3" r="10" stroke="#5fd75f" fill="none" stroke-width="1"/>
<circle cx="574.3" cy="500.5" r="8.3" stroke="#e2ea80" fill="none" stroke-width="1"/>
<circle cx="574.3" cy="500.5" r="3.3" stroke="#5fd75f" fill="none" stroke-width="1"/>
<path d="M559.30 500.50L570.20 500.50M573.00 500.50L575.60 500.50M578.40 500.50L589.30 500.50" stroke="#a0343e" stroke-width="1" fill="none"/>
<path d="M574.50 487.50L574.50 497.15M574.50 499.95L574.50 502.55M574.50 505.35L574.50 515.00" stroke="#a0343e" stroke-width="1" fill="none"/>
<circle cx="707.1" cy="500.3" r="10" stroke="#5fd75f" fill="none" stroke-width="1"/>
<circle cx="707.1" cy="500.5" r="8.3" stroke="#e2ea80" fill="none" stroke-width="1"/>
<circle cx="707.1" cy="500.5" r="3.3" stroke="#5fd75f" fill="none" stroke-width="1"/>
<path d="M692.10 500.50L703.00 500.50M705.80 500.50L708.40 500.50M711.20 500.50L722.10 500.50" stroke="#a0343e" stroke-width="1" fill="none"/>
<path d="M707.50 487.50L707.50 497.15M707.50 499.95L707.50 502.55M707.50 505.35L707.50 515.00" stroke="#a0343e" stroke-width="1" fill="none"/>
<path d="M614.5 446.5H667.5Q670.5 446.5 670.5 449.5V468.5Q670.5 471.5 667.5 471.5H614.5Q611.5 471.5 611.5 468.5V449.5Q611.5 446.5 614.5 446.5Z" stroke="#e2ea80" fill="none" stroke-width="1"/>
<line x1="611.5" y1="457.5" x2="670.5" y2="457.5" stroke="#e2ea80" stroke-width="1"/>
<line x1="611.5" y1="460.5" x2="670.5" y2="460.5" stroke="#e2ea80" stroke-width="1"/>
<path d="M627.59 450.30L626.62 449.30L624.07 449.30L622.50 450.30L621.30 454.30L622.27 455.30L624.82 455.30L626.39 454.30M628.64 455.30L630.44 449.30M633.73 455.30L635.53 449.30M629.54 452.30L634.63 452.30M643.17 449.30L638.08 449.30L636.28 455.30L641.37 455.30M637.18 452.30L641.00 452.30M645.72 449.30L643.92 455.30L649.01 455.30M651.56 455.30L653.36 449.30M660.70 450.30L659.73 449.30L657.18 449.30L655.61 450.30L654.41 454.30L655.38 455.30L657.93 455.30L659.50 454.30" stroke="#f5f5f5" fill="none" stroke-width="1.3" stroke-linecap="round" stroke-linejoin="round"/>
<path d="M661.5 453.5H667.5V456.5H661.5Z" stroke="#e2ea80" fill="none" stroke-width="1"/>
<path d="M614.5 465.5L614.5 466.5L615.5 466.5L615.5 465.5L615.5 462.5M616.5 466.5L616.5 462.5L618.5 462.5L619.5 463.5L619.5 465.5L618.5 466.5L616.5 466.5M620.5 464.5L623.5 464.5M624.5 463.5L624.5 462.5L626.5 462.5L626.5 463.5L626.5 463.5L624.5 466.5L626.5 466.5M628.5 466.5L629.5 466.5L630.5 465.5L630.5 463.5L629.5 462.5L628.5 462.5L627.5 463.5L627.5 465.5L628.5 466.5" stroke="#e2ea80" fill="none" stroke-width="1.1" stroke-linecap="round" stroke-linejoin="round"/>
<path d="M614.5 467.5L614.5 467.5L615.5 467.5L616.5 467.5L616.5 468.5L614.5 470.5L616.5 470.5M617.5 468.5L620.5 468.5M621.5 470.5L621.5 467.5L623.5 468.5L624.5 467.5L624.5 470.5M628.5 467.5L626.5 467.5L626.5 468.5L627.5 468.5L628.5 469.5L628.5 469.5L627.5 470.5L626.5 470.5L626.5 469.5M629.5 470.5L632.5 468.5M629.5 468.5L632.5 470.5M633.5 470.5L635.5 470.5L635.5 469.5L635.5 467.5L635.5 467.5L633.5 467.5L633.5 467.5L633.5 469.5L633.5 470.5M636.5 470.5L636.5 470.5M638.5 468.5L638.5 468.5L638.5 467.5L638.5 467.5L639.5 467.5L640.5 467.5L640.5 468.5L639.5 468.5L638.5 468.5L638.5 469.5L638.5 469.5L638.5 470.5L639.5 470.5L640.5 469.5L640.5 469.5L639.5 468.5M645.5 467.5L645.5 467.5L647.5 467.5L647.5 467.5L647.5 468.5L645.5 470.5L647.5 470.5M649.5 470.5L650.5 470.5L651.5 469.5L651.5 467.5L650.5 467.5L649.5 467.5L648.5 467.5L648.5 469.5L649.5 470.5M652.5 470.5L654.5 468.5M652.5 468.5L654.5 470.5M656.5 467.5L656.5 467.5L657.5 467.5L658.5 467.5L658.5 468.5L657.5 468.5L658.5 469.5L658.5 469.5L657.5 470.5L656.5 470.5L656.5 469.5M656.5 468.5L657.5 468.5M660.5 470.5L661.5 470.5L662.5 469.5L662.5 467.5L661.5 467.5L660.5 467.5L659.5 467.5L659.5 469.5L660.5 470.5" stroke="#e2ea80" fill="none" stroke-width="1.2" stroke-linecap="round" stroke-linejoin="round"/>
<path d="M635.5 499.5L635.5 499.5L636.5 499.5L637.5 499.5L637.5 495.5M638.5 499.5L638.5 495.5L640.5 495.5L640.5 496.5L640.5 499.5L640.5 499.5L638.5 499.5M641.5 496.5L642.5 495.5L643.5 495.5L644.5 496.5L644.5 497.5L641.5 499.5L644.5 499.5M646.5 499.5L647.5 499.5L647.5 499.5L647.5 496.5L647.5 495.5L646.5 495.5L645.5 496.5L645.5 499.5L646.5 499.5" stroke="#5fd75f" fill="none" stroke-width="0.9" stroke-linecap="round" stroke-linejoin="round"/>
<line x1="470.5" y1="331.8" x2="470.5" y2="487.5" stroke="#5fd75f" stroke-width="1"/>
<line x1="545.5" y1="363" x2="545.5" y2="434" stroke="#5fd75f" stroke-width="1"/>
<line x1="735.5" y1="333" x2="735.5" y2="434" stroke="#5fd75f" stroke-width="1"/>
<line x1="539.5" y1="394" x2="539.5" y2="474" stroke="#5fd75f" stroke-width="1"/>
<line x1="470.5" y1="336.5" x2="735.5" y2="336.5" stroke="#5fd75f" stroke-width="1"/>
<path d="M470.50 336.50L475.00 335.80L476.00 334.90L480.50 334.90L479.50 336.50L480.50 338.10L476.00 338.10L475.00 337.20Z" fill="#5fd75f" stroke="#5fd75f" stroke-width="0.5"/>
<path d="M735.50 336.50L731.00 337.20L730.00 338.10L725.50 338.10L726.50 336.50L725.50 334.90L730.00 334.90L731.00 335.80Z" fill="#5fd75f" stroke="#5fd75f" stroke-width="0.5"/>
<line x1="470.5" y1="366.5" x2="735.5" y2="366.5" stroke="#5fd75f" stroke-width="1"/>
<path d="M470.50 366.50L475.00 365.80L476.00 364.90L480.50 364.90L479.50 366.50L480.50 368.10L476.00 368.10L475.00 367.20Z" fill="#5fd75f" stroke="#5fd75f" stroke-width="0.5"/>
<path d="M545.50 366.50L541.00 367.20L540.00 368.10L535.50 368.10L536.50 366.50L535.50 364.90L540.00 364.90L541.00 365.80Z" fill="#5fd75f" stroke="#5fd75f" stroke-width="0.5"/>
<path d="M545.50 366.50L550.00 365.80L551.00 364.90L555.50 364.90L554.50 366.50L555.50 368.10L551.00 368.10L550.00 367.20Z" fill="#5fd75f" stroke="#5fd75f" stroke-width="0.5"/>
<path d="M735.50 366.50L731.00 367.20L730.00 368.10L725.50 368.10L726.50 366.50L725.50 364.90L730.00 364.90L731.00 365.80Z" fill="#5fd75f" stroke="#5fd75f" stroke-width="0.5"/>
<line x1="470.5" y1="397.5" x2="585" y2="397.5" stroke="#5fd75f" stroke-width="1"/>
<path d="M470.50 397.50L475.00 396.80L476.00 395.90L480.50 395.90L479.50 397.50L480.50 399.10L476.00 399.10L475.00 398.20Z" fill="#5fd75f" stroke="#5fd75f" stroke-width="0.5"/>
<path d="M539.50 397.50L535.00 398.20L534.00 399.10L529.50 399.10L530.50 397.50L529.50 395.90L534.00 395.90L535.00 396.80Z" fill="#5fd75f" stroke="#5fd75f" stroke-width="0.5"/>
<path d="M545.50 397.50L550.00 396.80L551.00 395.90L555.50 395.90L554.50 397.50L555.50 399.10L551.00 399.10L550.00 398.20Z" fill="#5fd75f" stroke="#5fd75f" stroke-width="0.5"/>
<path d="M601.5 322.5L599.5 320.5L596.5 320.5L594.5 322.5L594.5 328.5L596.5 330.5L599.5 330.5L601.5 328.5L601.5 326.5L599.5 325.5L596.5 325.5L594.5 326.5M604.5 328.5L606.5 330.5L610.5 330.5L611.5 328.5L611.5 322.5L610.5 320.5L606.5 320.5L604.5 322.5L604.5 323.5L606.5 325.5L610.5 325.5L611.5 323.5" stroke="#5fd75f" fill="none" stroke-width="1.0" stroke-linecap="round" stroke-linejoin="round"/>
<path d="M492.5 353.5L494.5 351.5L494.5 361.5M500.5 359.5L502.5 361.5L506.5 361.5L508.5 359.5L508.5 353.5L506.5 351.5L502.5 351.5L500.5 353.5L500.5 354.5L502.5 356.5L506.5 356.5L508.5 354.5M511.5 361.5L511.5 360.5M523.5 351.5L515.5 351.5L515.5 356.5L521.5 356.5L523.5 357.5L523.5 359.5L521.5 361.5L517.5 361.5L515.5 359.5" stroke="#5fd75f" fill="none" stroke-width="1.0" stroke-linecap="round" stroke-linejoin="round"/>
<path d="M630.5 361.5L630.5 351.5L625.5 357.5L632.5 357.5M636.5 359.5L637.5 361.5L641.5 361.5L643.5 359.5L643.5 353.5L641.5 351.5L637.5 351.5L636.5 353.5L636.5 354.5L637.5 356.5L641.5 356.5L643.5 354.5M646.5 361.5L646.5 360.5M657.5 351.5L650.5 351.5L650.5 356.5L655.5 356.5L657.5 357.5L657.5 359.5L655.5 361.5L652.5 361.5L650.5 359.5" stroke="#5fd75f" fill="none" stroke-width="1.0" stroke-linecap="round" stroke-linejoin="round"/>
<path d="M500.5 383.5L502.5 381.5L502.5 391.5M509.5 386.5L507.5 385.5L507.5 383.5L509.5 381.5L513.5 381.5L515.5 383.5L515.5 385.5L513.5 386.5L509.5 386.5L507.5 388.5L507.5 389.5L509.5 391.5L513.5 391.5L515.5 389.5L515.5 388.5L513.5 386.5" stroke="#5fd75f" fill="none" stroke-width="1.0" stroke-linecap="round" stroke-linejoin="round"/>
<path d="M564.5 383.5L566.5 381.5L566.5 391.5M572.5 391.5L572.5 390.5M585.5 381.5L577.5 381.5L577.5 386.5L583.5 386.5L585.5 388.5L585.5 389.5L583.5 391.5L579.5 391.5L577.5 389.5" stroke="#5fd75f" fill="none" stroke-width="1.0" stroke-linecap="round" stroke-linejoin="round"/>
<path d="M766.5 385.5L767.5 383.5L770.5 383.5L772.5 385.5L772.5 387.5L766.5 394.5L772.5 394.5M775.5 388.5L782.5 388.5M785.5 394.5L785.5 383.5L789.5 388.5L792.5 383.5L792.5 394.5M801.5 383.5L795.5 383.5L795.5 388.5L800.5 388.5L801.5 390.5L801.5 392.5L800.5 394.5L797.5 394.5L795.5 392.5M804.5 394.5L810.5 387.5M804.5 387.5L810.5 394.5M814.5 394.5L817.5 394.5L819.5 392.5L819.5 385.5L817.5 383.5L814.5 383.5L813.5 385.5L813.5 392.5L814.5 394.5M822.5 394.5L822.5 393.5M826.5 388.5L825.5 387.5L825.5 385.5L826.5 383.5L829.5 383.5L831.5 385.5L831.5 387.5L829.5 388.5L826.5 388.5L825.5 390.5L825.5 392.5L826.5 394.5L829.5 394.5L831.5 392.5L831.5 390.5L829.5 388.5M834.5 397.5L834.5 387.5M834.5 388.5L835.5 387.5L838.5 387.5L840.5 388.5L840.5 392.5L838.5 394.5L835.5 394.5L834.5 392.5" stroke="#5fd75f" fill="none" stroke-width="1.0" stroke-linecap="round" stroke-linejoin="round"/>
<line x1="754.7" y1="397.5" x2="844.2" y2="397.5" stroke="#5fd75f" stroke-width="1"/>
<line x1="754.7" y1="397.5" x2="710.5" y2="491.1" stroke="#5fd75f" stroke-width="1"/>
<path d="M710.50 491.10L711.79 486.73L711.40 485.44L713.32 481.37L714.34 482.96L716.22 482.74L714.30 486.81L713.05 487.33Z" fill="#5fd75f" stroke="#5fd75f" stroke-width="0.5"/>
<line x1="398" y1="476.5" x2="539.9" y2="476.5" stroke="#5fd75f" stroke-width="1"/>
<line x1="398" y1="525.5" x2="539.9" y2="525.5" stroke="#5fd75f" stroke-width="1"/>
<line x1="400.5" y1="476.5" x2="400.5" y2="525.5" stroke="#5fd75f" stroke-width="1"/>
<path d="M400.50 476.50L401.20 481.00L402.10 482.00L402.10 486.50L400.50 485.50L398.90 486.50L398.90 482.00L399.80 481.00Z" fill="#5fd75f" stroke="#5fd75f" stroke-width="0.5"/>
<path d="M400.50 525.50L399.80 521.00L398.90 520.00L398.90 515.50L400.50 516.50L402.10 515.50L402.10 520.00L401.20 521.00Z" fill="#5fd75f" stroke="#5fd75f" stroke-width="0.5"/>
<line x1="429" y1="485.5" x2="525" y2="485.5" stroke="#5fd75f" stroke-width="1"/>
<line x1="429" y1="516.5" x2="525" y2="516.5" stroke="#5fd75f" stroke-width="1"/>
<line x1="431.5" y1="485.5" x2="431.5" y2="516" stroke="#5fd75f" stroke-width="1"/>
<path d="M431.50 485.50L432.20 490.00L433.10 491.00L433.10 495.50L431.50 494.50L429.90 495.50L429.90 491.00L430.80 490.00Z" fill="#5fd75f" stroke="#5fd75f" stroke-width="0.5"/>
<path d="M431.50 516.00L430.80 511.50L429.90 510.50L429.90 506.00L431.50 507.00L433.10 506.00L433.10 510.50L432.20 511.50Z" fill="#5fd75f" stroke="#5fd75f" stroke-width="0.5"/>
<path d="M394.5 511.5L394.5 507.5L393.5 506.5L390.5 506.5L388.5 507.5L388.5 511.5L390.5 513.5L393.5 513.5L394.5 511.5M395.5 511.5L387.5 507.5M388.5 502.5L387.5 500.5L395.5 500.5M388.5 495.5L387.5 493.5L387.5 489.5L388.5 487.5L390.5 487.5L391.5 489.5L392.5 487.5L394.5 487.5L395.5 489.5L395.5 493.5L394.5 495.5M391.5 493.5L391.5 489.5" stroke="#5fd75f" fill="none" stroke-width="1.0" stroke-linecap="round" stroke-linejoin="round"/>
<path d="M384.5 484.5L384.5 476.5M389.5 471.5L389.5 468.5L387.5 466.5L380.5 466.5L379.5 468.5L379.5 471.5L380.5 473.5L387.5 473.5L389.5 471.5M389.5 463.5L388.5 463.5M389.5 459.5L389.5 456.5L387.5 454.5L380.5 454.5L379.5 456.5L379.5 459.5L380.5 460.5L387.5 460.5L389.5 459.5M379.5 445.5L379.5 451.5L384.5 451.5L384.5 446.5L385.5 445.5L387.5 445.5L389.5 446.5L389.5 449.5L387.5 451.5" stroke="#5fd75f" fill="none" stroke-width="1.0" stroke-linecap="round" stroke-linejoin="round"/>
<path d="M372.5 475.5L372.5 472.5L371.5 471.5L365.5 471.5L364.5 472.5L364.5 475.5L365.5 476.5L371.5 476.5L372.5 475.5" stroke="#5fd75f" fill="none" stroke-width="1.0" stroke-linecap="round" stroke-linejoin="round"/>
<path d="M424.5 508.5L424.5 505.5L423.5 503.5L419.5 503.5L417.5 505.5L417.5 508.5L419.5 509.5L423.5 509.5L424.5 508.5M425.5 508.5L415.5 504.5M420.5 498.5L419.5 500.5L417.5 500.5L415.5 498.5L415.5 495.5L417.5 494.5L419.5 494.5L420.5 495.5L420.5 498.5L422.5 500.5L423.5 500.5L425.5 498.5L425.5 495.5L423.5 494.5L422.5 494.5L420.5 495.5" stroke="#5fd75f" fill="none" stroke-width="1.0" stroke-linecap="round" stroke-linejoin="round"/>
<line x1="531.8" y1="505.6" x2="497" y2="564" stroke="#e2ea80" stroke-width="1"/>
<path d="M493.9 560.8L489.4 568.6" stroke="#e2ea80" fill="none" stroke-width="1"/>
<path d="M501.7 560.4L501 568.6" stroke="#e2ea80" fill="none" stroke-width="1"/>
<path d="M489 582C485.5 580 484.3 577 484.5 573.5C485.3 569.3 489.5 567 494.7 567C499.9 567 504.1 569.3 504.9 573.5C505.1 577 503.9 580 500.5 582V577.5Q500.5 574.5 497.5 574.5H492Q489 574.5 489 577.5Z" stroke="#e2ea80" fill="none" stroke-width="1"/>
<line x1="489.5" y1="583" x2="489.5" y2="605.5" stroke="#5fd75f" stroke-width="1"/>
<line x1="499.5" y1="583" x2="499.5" y2="605.5" stroke="#5fd75f" stroke-width="1"/>
<line x1="470.9" y1="601.5" x2="527" y2="601.5" stroke="#5fd75f" stroke-width="1"/>
<path d="M489.40 601.50L484.90 602.20L483.90 603.10L479.40 603.10L480.40 601.50L479.40 599.90L483.90 599.90L484.90 600.80Z" fill="#5fd75f" stroke="#5fd75f" stroke-width="0.5"/>
<path d="M499.70 601.50L504.20 600.80L505.20 599.90L509.70 599.90L508.70 601.50L509.70 603.10L505.20 603.10L504.20 602.20Z" fill="#5fd75f" stroke="#5fd75f" stroke-width="0.5"/>
<path d="M521.5 588.5L520.5 586.5L516.5 586.5L515.5 588.5L515.5 594.5L516.5 596.5L520.5 596.5L521.5 594.5L521.5 593.5L520.5 591.5L516.5 591.5L515.5 593.5" stroke="#5fd75f" fill="none" stroke-width="1.0" stroke-linecap="round" stroke-linejoin="round"/>
</svg></body></html>
